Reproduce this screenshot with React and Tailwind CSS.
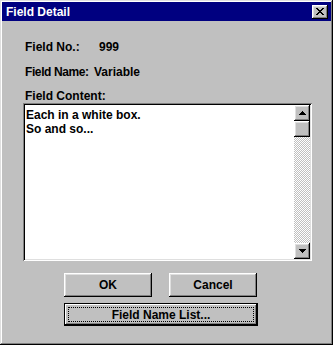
import React from "react";

const raised =
  "shadow-[inset_-1px_-1px_#000,inset_1px_1px_#fff,inset_-2px_-2px_#808080,inset_2px_2px_#dfdfdf]";
const sunken =
  "shadow-[inset_1px_1px_#808080,inset_-1px_-1px_#fff,inset_2px_2px_#000,inset_-2px_-2px_#dfdfdf]";

function Arrow({ up }) {
  return (
    <svg width="7" height="4" viewBox="0 0 7 4" shapeRendering="crispEdges">
      {up ? (
        <path d="M3 0h1v1h1v1h1v1h1v1H0V3h1V2h1V1h1z" fill="#000" />
      ) : (
        <path d="M0 0h7v1H6v1H5v1H4v1H3V3H2V2H1V1H0z" fill="#000" />
      )}
    </svg>
  );
}

function CloseGlyph() {
  return (
    <svg width="8" height="7" viewBox="0 0 8 7" shapeRendering="crispEdges">
      <path
        d="M0 0h2v1h1v1h2V1h1V0h2v1H7v1H6v1H5v1h1v1h1v1h1v1H6V6H5V5H3v1H2v1H0V6h1V5h1V4h1V3H2V2H1V1H0z"
        fill="#000"
      />
    </svg>
  );
}

export default function App() {
  return (
    <div
      className="w-[333px] h-[345px] bg-[#c0c0c0] p-[2px] flex flex-col shadow-[inset_-1px_-1px_#000,inset_1px_1px_#dfdfdf,inset_-2px_-2px_#808080,inset_2px_2px_#fff] text-black"
      style={{ fontFamily: '"Liberation Sans", Arial, sans-serif' }}
    >
      <div className="h-[19px] bg-[#000080] flex items-center justify-between pl-[4px] pr-[3px]">
        <span className="text-white font-bold text-[12px] leading-[14px]">
          Field Detail
        </span>
        <div
          className={`w-[16px] h-[14px] bg-[#c0c0c0] flex items-center justify-center ${raised}`}
        >
          <CloseGlyph />
        </div>
      </div>

      <div className="flex flex-col pt-[19px] px-[21px] font-bold text-[12px] leading-[14px]">
        <div className="flex pl-[2px]">
          <span className="w-[74px]">Field No.:</span>
          <span>999</span>
        </div>
        <div className="flex pl-[2px] mt-[11px]">
          <span className="w-[69px] tracking-[-0.4px]">Field Name:</span>
          <span>Variable</span>
        </div>
        <div className="pl-[2px] mt-[10px]">Field Content:</div>

        <div className={`mt-0 h-[158px] w-[289px] bg-white p-[2px] flex ${sunken}`}>
          <div className="flex-1 pl-[1px] pt-[3px] leading-[14px]">
            <div>Each in a white box.</div>
            <div>So and so...</div>
          </div>
          <div className="w-[16px] flex flex-col">
            <div
              className={`h-[16px] bg-[#c0c0c0] flex items-center justify-center ${raised}`}
            >
              <Arrow up />
            </div>
            <div className={`h-[16px] bg-[#c0c0c0] ${raised}`} />
            <div className="flex-1 bg-[conic-gradient(#fff_25%,#c0c0c0_0_50%,#fff_0_75%,#c0c0c0_0)] bg-[length:2px_2px]" />
            <div
              className={`h-[16px] bg-[#c0c0c0] flex items-center justify-center ${raised}`}
            >
              <Arrow />
            </div>
          </div>
        </div>

        <div className="flex mt-[12px] pl-[41px] gap-[17px]">
          <div
            className={`w-[88px] h-[24px] flex items-center justify-center ${raised}`}
          >
            OK
          </div>
          <div
            className={`w-[88px] h-[24px] flex items-center justify-center ${raised}`}
          >
            Cancel
          </div>
        </div>
        <div className="mt-[6px] pl-[41px]">
          <div className="w-[194px] h-[23px] border border-black">
            <div
              className={`w-full h-full p-[3px] shadow-[inset_-1px_-1px_#000,inset_1px_1px_#fff,inset_-2px_-2px_#808080]`}
            >
              <div className="w-full h-full border border-dotted border-black flex items-center justify-center">
                Field Name List...
              </div>
            </div>
          </div>
        </div>
      </div>
    </div>
  );
}
